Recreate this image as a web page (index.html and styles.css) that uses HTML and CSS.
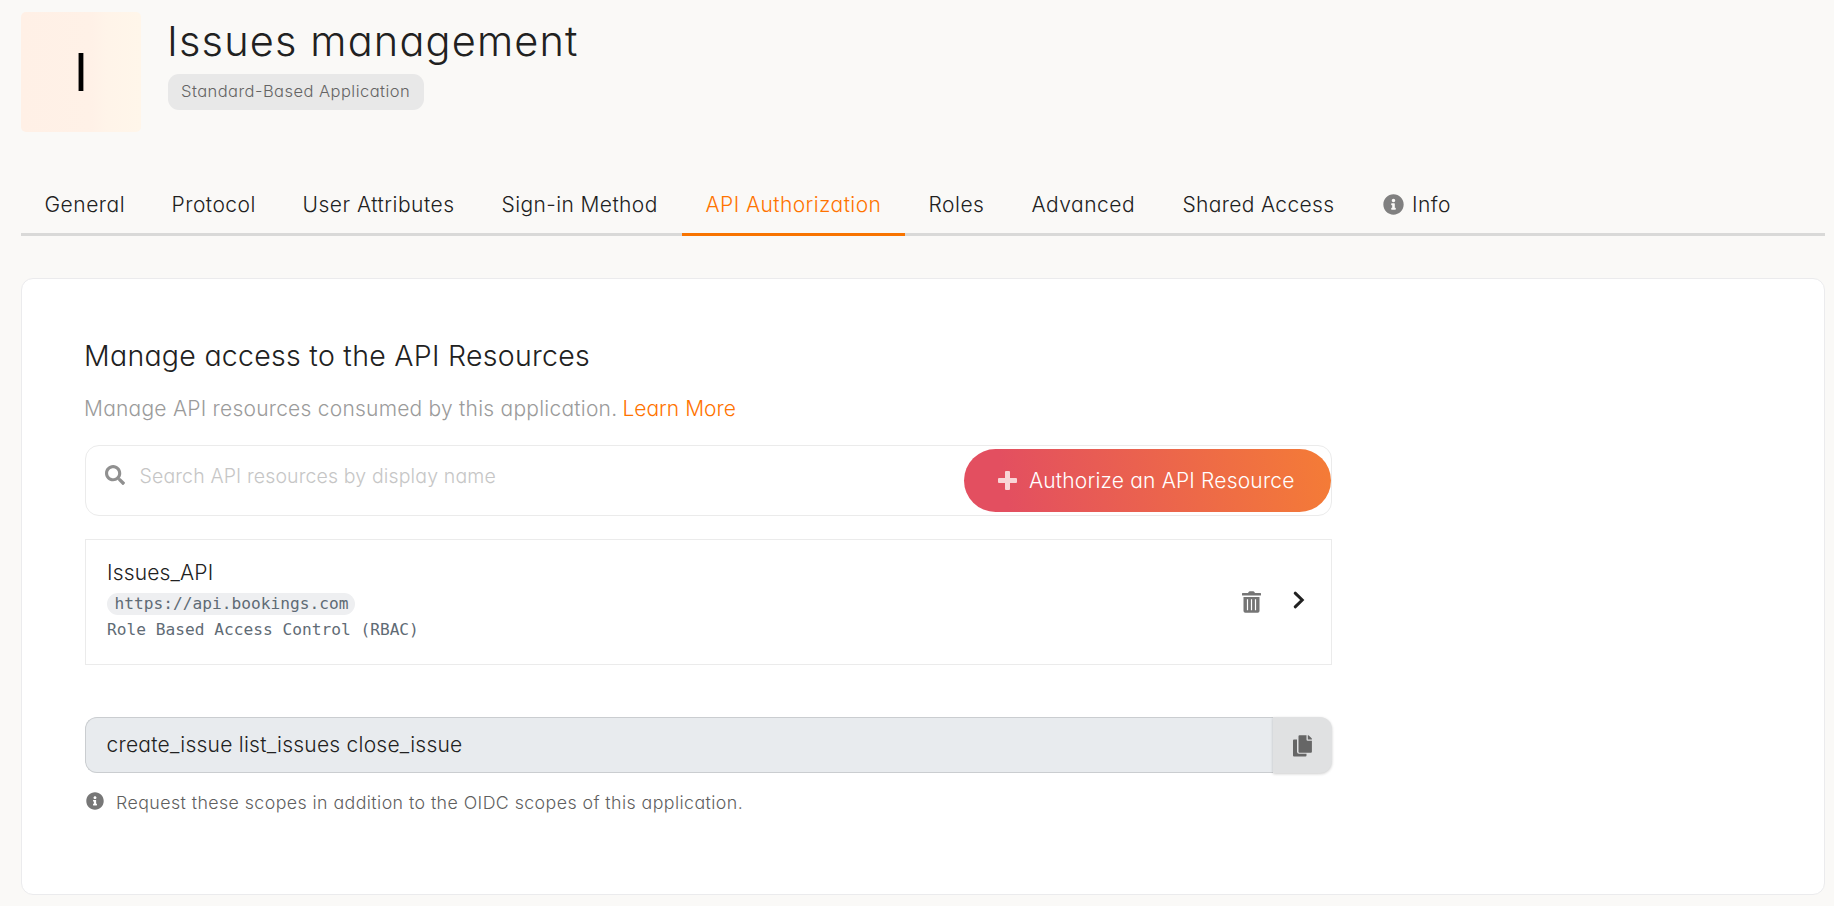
FILE: index.html
```
<!DOCTYPE html>
<html lang="en">
<head>
<meta charset="utf-8">
<title>Issues management</title>
<link rel="stylesheet" href="styles.css">
</head>
<body>
<header class="app-header">
  <div class="avatar">I</div>
  <div class="app-heading">
    <h1 class="app-title">Issues management</h1>
    <span class="app-badge">Standard-Based Application</span>
  </div>
</header>

<nav class="tabs">
  <a class="tab tab-general">General</a>
  <a class="tab tab-protocol">Protocol</a>
  <a class="tab tab-attributes">User Attributes</a>
  <a class="tab tab-signin">Sign-in Method</a>
  <a class="tab tab-api active">API Authorization</a>
  <a class="tab tab-roles">Roles</a>
  <a class="tab tab-advanced">Advanced</a>
  <a class="tab tab-shared">Shared Access</a>
  <a class="tab tab-info">
    <svg class="tab-icon" viewBox="0 0 512 512"><path fill="currentColor" d="M256 8C119 8 8 119 8 256s111 248 248 248 248-111 248-248S393 8 256 8zm0 110c23.200 0 42 18.800 42 42s-18.800 42-42 42-42-18.800-42-42 18.800-42 42-42zm56 254c0 6.600-5.400 12-12 12h-88c-6.600 0-12-5.400-12-12v-24c0-6.600 5.400-12 12-12h12v-64h-12c-6.600 0-12-5.400-12-12v-24c0-6.600 5.400-12 12-12h64c6.600 0 12 5.400 12 12v100h12c6.600 0 12 5.400 12 12z"/></svg>
    <span>Info</span>
  </a>
</nav>

<main class="card">
  <div class="panel">
    <h2 class="panel-title">Manage access to the API Resources</h2>
    <p class="panel-sub">Manage API resources consumed by this application. <a class="link">Learn More</a></p>

    <div class="search">
      <svg class="search-icon" viewBox="0 0 512 512"><path fill="currentColor" d="M505 442.700L405.300 343c-4.500-4.500-10.600-7-17-7H372c27.600-35.300 44-79.700 44-128C416 93.100 322.900 0 208 0S0 93.100 0 208s93.100 208 208 208c48.300 0 92.700-16.400 128-44v16.300c0 6.400 2.500 12.500 7 17l99.700 99.700c9.400 9.400 24.600 9.400 33.900 0l28.300-28.300c9.400-9.400 9.400-24.600.1-34zM208 336c-70.700 0-128-57.200-128-128 0-70.700 57.200-128 128-128 70.700 0 128 57.200 128 128 0 70.700-57.200 128-128 128z"/></svg>
      <span class="search-text">Search API resources by display name</span>
      <button class="authorize">
        <svg class="plus-icon" viewBox="0 0 19 19"><path fill="currentColor" d="M8 0h3q1 0 1 1v6h6q1 0 1 1v3q0 1-1 1h-6v6q0 1-1 1H8q-1 0-1-1v-6H1q-1 0-1-1V8q0-1 1-1h6V1q0-1 1-1z"/></svg>
        <span>Authorize an API Resource</span>
      </button>
    </div>

    <section class="resource">
      <div class="resource-info">
        <span class="resource-name">Issues_API</span>
        <code class="resource-url">https://api.bookings.com</code>
        <code class="resource-policy">Role Based Access Control (RBAC)</code>
      </div>
      <svg class="trash-icon" viewBox="0 0 19 22"><path fill="currentColor" fill-rule="evenodd" d="M.6 2H6l.8-1.300Q7.100.2 7.700.2h3.600q.6 0 .9.500L13 2h5.400q.6 0 .6.600V4q0 .6-.6.600H.6Q0 4.600 0 4V2.600Q0 2 .6 2zM1.500 6h16v14q0 1.800-1.800 1.800H3.300Q1.500 21.800 1.500 20zM4.900 8.300v10.900h1.200V8.300zm4 0v10.900h1.200V8.300zm4 0v10.900h1.200V8.300z"/></svg>
      <svg class="chevron-icon" viewBox="0 0 12 18"><path fill="none" stroke="currentColor" stroke-width="3" stroke-linecap="round" stroke-linejoin="miter" d="M2.200 2.200L9.200 9l-7 6.800"/></svg>
    </section>

    <div class="scopes">
      <div class="scopes-value">create_issue list_issues close_issue</div>
      <button class="copy">
        <svg class="copy-icon" viewBox="0 0 19 22"><path fill="currentColor" d="M1 4.500h3v12.300q0 2 2 2h7.500v1.700q0 1-1 1H1q-1 0-1-1v-15q0-1 1-1z"/><path fill="currentColor" d="M6.500.2h7v4.300q0 1.200 1.200 1.200h4.200V16.700q0 1-1 1H6.500q-1 0-1-1V1.200q0-1 1-1z"/><path fill="currentColor" d="M14.800.2h.3q.4 0 .7.300l2.800 2.800q.3.300.3.700v.4h-4.100z"/></svg>
      </button>
    </div>

    <p class="note">
      <svg class="note-icon" viewBox="0 0 512 512"><path fill="currentColor" d="M256 8C119 8 8 119 8 256s111 248 248 248 248-111 248-248S393 8 256 8zm0 110c23.200 0 42 18.800 42 42s-18.800 42-42 42-42-18.800-42-42 18.800-42 42-42zm56 254c0 6.600-5.400 12-12 12h-88c-6.600 0-12-5.400-12-12v-24c0-6.600 5.400-12 12-12h12v-64h-12c-6.600 0-12-5.400-12-12v-24c0-6.600 5.400-12 12-12h64c6.600 0 12 5.400 12 12v100h12c6.600 0 12 5.400 12 12z"/></svg>
      <span>Request these scopes in addition to the OIDC scopes of this application.</span>
    </p>
  </div>
</main>
</body>
</html>
```
FILE: styles.css
```
* { box-sizing: border-box; }

body {
  margin: 0;
  padding: 12px 9px 10px 21px;
  height: 906px;
  overflow: hidden;
  background: #faf9f7;
  color: #212121;
  font-family: Inter, "Open Sans", sans-serif;
  font-weight: 350;
  font-feature-settings: "cv11";
}

h1, h2, p { margin: 0; font-weight: 350; }
svg { display: block; flex: none; }
button { border: 0; padding: 0; font: inherit; font-feature-settings: inherit; }

/* Header */
.app-header { display: flex; gap: 27px; height: 120px; }

.avatar {
  width: 120px;
  height: 120px;
  border-radius: 5px;
  background: linear-gradient(90deg, #fff0e6 0%, #fff1e7 58%, #fff4e9 72%, #fff6ea 100%);
  color: #000;
  font-size: 52px;
  font-weight: 400;
  line-height: 121px;
  text-align: center;
}

.app-heading {
  display: flex;
  flex-direction: column;
  align-items: flex-start;
  gap: 9px;
  padding-top: 5px;
}

.app-title { font-size: 41.500px; line-height: 48px; letter-spacing: 1.15px; margin-left: -1px; }

.app-badge {
  width: 256px;
  height: 36px;
  padding-left: 13px;
  border-radius: 11px;
  background: #e8e8e8;
  color: #646464;
  font-size: 16.500px;
  line-height: 35px;
  letter-spacing: 0.46px;
  white-space: nowrap;
}

/* Tabs */
.tabs {
  display: flex;
  height: 60px;
  margin-top: 44px;
  border-bottom: 3px solid #d9d9d8;
}

.tab {
  height: 60px;
  padding-left: 23.500px;
  border-bottom: 3px solid transparent;
  font-size: 21px;
  line-height: 58px;
  letter-spacing: 0.5px;
  white-space: nowrap;
}

.tab-general { width: 127px; }
.tab-protocol { width: 131px; }
.tab-attributes { width: 199px; }
.tab-signin { width: 204px; letter-spacing: 0.4px; }
.tab-api { width: 223px; letter-spacing: 0.42px; }
.tab-roles { width: 103px; }
.tab-advanced { width: 151px; }
.tab-shared { width: 200px; letter-spacing: 0.33px; }
.tab-info { display: flex; gap: 8px; padding-left: 24px; }
.tab.active { border-color: #f87400; color: #ff7300; }
.tab-icon { width: 21px; height: 21px; margin-top: 18px; color: #808080; }

/* Card */
.card {
  height: 617px;
  margin-top: 42px;
  padding: 59px 63px 0;
  border: 1px solid #ebebed;
  border-radius: 12px;
  background: #fff;
}

.panel { width: 1247px; }
.panel-title { font-size: 28.500px; line-height: 36px; letter-spacing: 0.28px; margin-left: -1px; }

.panel-sub {
  margin-top: 21px;
  color: #9b9b9b;
  font-size: 21px;
  line-height: 28px;
  letter-spacing: 0.23px;
  margin-left: -1px;
}

.link { margin-left: -1px; color: #ff7300; letter-spacing: 0; }

.search {
  display: flex;
  height: 71px;
  margin-top: 22px;
  border: 1px solid #ebebeb;
  border-radius: 14px;
}

.search-icon { width: 20px; height: 20px; margin: 19px 0 0 19px; color: #909090; }

.search-text {
  flex: 1;
  margin-left: 14.500px;
  color: #c6c6c6;
  font-size: 19.500px;
  line-height: 60px;
  letter-spacing: 0.14px;
}

.authorize {
  display: flex;
  align-items: center;
  gap: 12px;
  width: 367px;
  height: 63px;
  margin-top: 3px;
  padding-left: 34px;
  border-radius: 32px;
  background: linear-gradient(80deg, #e34f60 12%, #f47b37 98%);
  color: #fff;
  font-size: 21px;
  letter-spacing: 0.18px;
  white-space: nowrap;
}

.plus-icon { width: 19px; height: 19px; color: #f9d5d7; }

.resource {
  display: flex;
  height: 126px;
  margin-top: 23px;
  border: 1px solid #ebebeb;
}

.resource-info {
  display: flex;
  flex: 1;
  flex-direction: column;
  align-items: flex-start;
  padding: 19px 0 0 21px;
}

.resource-name { font-size: 21px; line-height: 28px; letter-spacing: 0.15px; }

.resource-url, .resource-policy {
  color: #5f6b75;
  font-family: "DejaVu Sans Mono", monospace;
  font-size: 16.200px;
}

.resource-url {
  margin-top: 6px;
  padding: 0 7px 0 7.500px;
  border-radius: 11px;
  background: #eeeff1;
  line-height: 22px;
}

.resource-policy { margin-top: 4px; line-height: 22px; }
.trash-icon { width: 19px; height: 22px; margin: 51px 32px 0 0; color: #757575; }
.chevron-icon { width: 12px; height: 18px; margin: 51px 26px 0 0; color: #212121; }

.scopes { display: flex; height: 56px; margin-top: 52px; }

.scopes-value {
  flex: 1;
  padding-left: 20.500px;
  border: 1px solid #cacdd0;
  border-right: 0;
  border-radius: 12px 0 0 12px;
  background: #e8ebee;
  font-size: 21px;
  line-height: 54px;
  letter-spacing: 0.24px;
}

.copy {
  display: flex;
  align-items: flex-start;
  width: 59px;
  height: 56px;
  padding: 18px 0 0 20px;
  border-radius: 0 12px 12px 0;
  background: #e0e1e2;
  box-shadow: 0 1px 3px rgba(0, 0, 0, 0.2);
}

.copy-icon { width: 19px; height: 22px; color: #666; }

.note {
  display: flex;
  gap: 12px;
  margin-top: 17px;
  color: #5f5f5f;
  font-size: 17.800px;
  line-height: 25px;
  letter-spacing: 0.42px;
}

.note-icon { width: 18px; height: 18px; margin: 2px 0 0 1px; color: #777; }
```
